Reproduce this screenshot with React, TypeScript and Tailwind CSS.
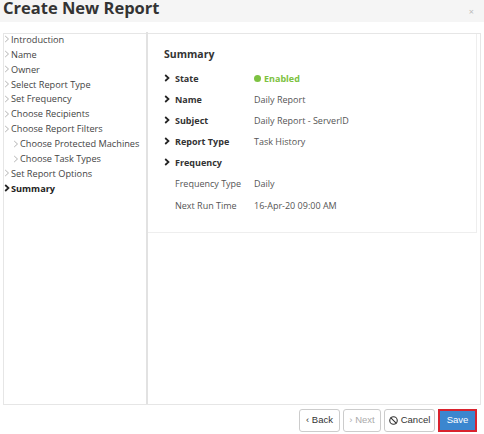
import { Ban } from "lucide-react";

const steps = [
  { label: "Introduction", indent: false },
  { label: "Name", indent: false },
  { label: "Owner", indent: false },
  { label: "Select Report Type", indent: false },
  { label: "Set Frequency", indent: false },
  { label: "Choose Recipients", indent: false },
  { label: "Choose Report Filters", indent: false },
  { label: "Choose Protected Machines", indent: true },
  { label: "Choose Task Types", indent: true },
  { label: "Set Report Options", indent: false },
  { label: "Summary", indent: false, active: true },
];

const rows = [
  { label: "Name", value: "Daily Report" },
  { label: "Subject", value: "Daily Report - ServerID" },
  { label: "Report Type", value: "Task History" },
];

function Chevron({ bold }: { bold?: boolean }) {
  return (
    <svg
      width="6"
      height="8"
      viewBox="0 0 6 8"
      className={bold ? "text-[#222] shrink-0" : "text-[#aaa] shrink-0"}
    >
      <path
        d="M1.2 1 L4.5 4 L1.2 7"
        fill="none"
        stroke="currentColor"
        strokeWidth={bold ? 1.7 : 0.9}
      />
    </svg>
  );
}

export default function App() {
  return (
    <div
      className="w-[484px] h-[434px] bg-white text-[#333] overflow-hidden"
      style={{ fontFamily: "'Open Sans', sans-serif" }}
    >
      {/* Header */}
      <div className="h-[22px] bg-[#f5f5f5] flex items-center justify-between pl-[3px] pr-[10px]">
        <h1 className="text-[16.5px] font-bold text-[#333] leading-none -mt-[5px]">
          Create New Report
        </h1>
        <span className="text-[9px] text-[#bbb] leading-none">×</span>
      </div>

      {/* Body */}
      <div className="mt-[11px] ml-[3px] w-[478px] h-[372px] border border-[#e6e6e6] flex">
        <div className="w-[144px] -mt-[2px] border-r-2 border-[#e2e2e2]">
          {steps.map((s) => (
            <div
              key={s.label}
              className={`h-[14.9px] flex items-center text-[9.2px] leading-none whitespace-nowrap ${
                s.indent ? "pl-[9px]" : "pl-0"
              } ${s.active ? "font-bold text-[#222]" : "text-[#444]"}`}
            >
              <Chevron bold={s.active} />
              <span className="ml-[1px]">{s.label}</span>
            </div>
          ))}
        </div>

        <div className="flex-1 pr-[3px]">
          <div className="h-[199px] border-b border-r border-[#eeeeee] pl-[16px] pt-[15px]">
            <h2 className="text-[10.5px] font-bold text-[#333] leading-none mb-[8px]">
              Summary
            </h2>
            <div className="flex flex-col text-[9px] leading-none">
              <div className="h-[21px] flex items-center">
                <div className="w-[90px] flex items-center gap-[5px] font-bold text-[#333]">
                  <Chevron bold />
                  <span>State</span>
                </div>
                <div className="flex items-center gap-[3px] font-bold text-[#7dc241]">
                  <span className="w-[7px] h-[7px] rounded-full bg-[#7dc241]" />
                  Enabled
                </div>
              </div>
              {rows.map((r) => (
                <div key={r.label} className="h-[21px] flex items-center">
                  <div className="w-[90px] flex items-center gap-[5px] font-bold text-[#333]">
                    <Chevron bold />
                    <span>{r.label}</span>
                  </div>
                  <span className="text-[#555]">{r.value}</span>
                </div>
              ))}
              <div className="h-[21px] flex items-center">
                <div className="w-[90px] flex items-center gap-[5px] font-bold text-[#333]">
                  <Chevron bold />
                  <span>Frequency</span>
                </div>
              </div>
              <div className="h-[22px] flex items-center pl-[11px] text-[#555]">
                <span className="w-[79px]">Frequency Type</span>
                <span>Daily</span>
              </div>
              <div className="h-[22px] flex items-center pl-[11px] text-[#555]">
                <span className="w-[79px]">Next Run Time</span>
                <span>16-Apr-20 09:00 AM</span>
              </div>
            </div>
          </div>
        </div>
      </div>

      {/* Footer buttons */}
      <div
        className="flex justify-end gap-[3px] pr-[7px] mt-[4px] text-[9.5px]"
        style={{ fontFamily: "'Liberation Sans', Arial, sans-serif" }}
      >
        <button className="h-[23px] w-[41px] border border-[#ccc] rounded-[3px] bg-white text-[#333]">
          ‹ Back
        </button>
        <button className="h-[23px] w-[38px] border border-[#ccc] rounded-[3px] bg-white text-[#aaa]">
          › Next
        </button>
        <button className="h-[23px] w-[51px] border border-[#ccc] rounded-[3px] bg-white text-[#333] flex items-center justify-center gap-[3px]">
          <Ban size={9} strokeWidth={3} />
          Cancel
        </button>
        <button className="h-[23px] w-[39px] border-2 border-[#d9232e] bg-[#3b86cf] text-white">
          Save
        </button>
      </div>
    </div>
  );
}
